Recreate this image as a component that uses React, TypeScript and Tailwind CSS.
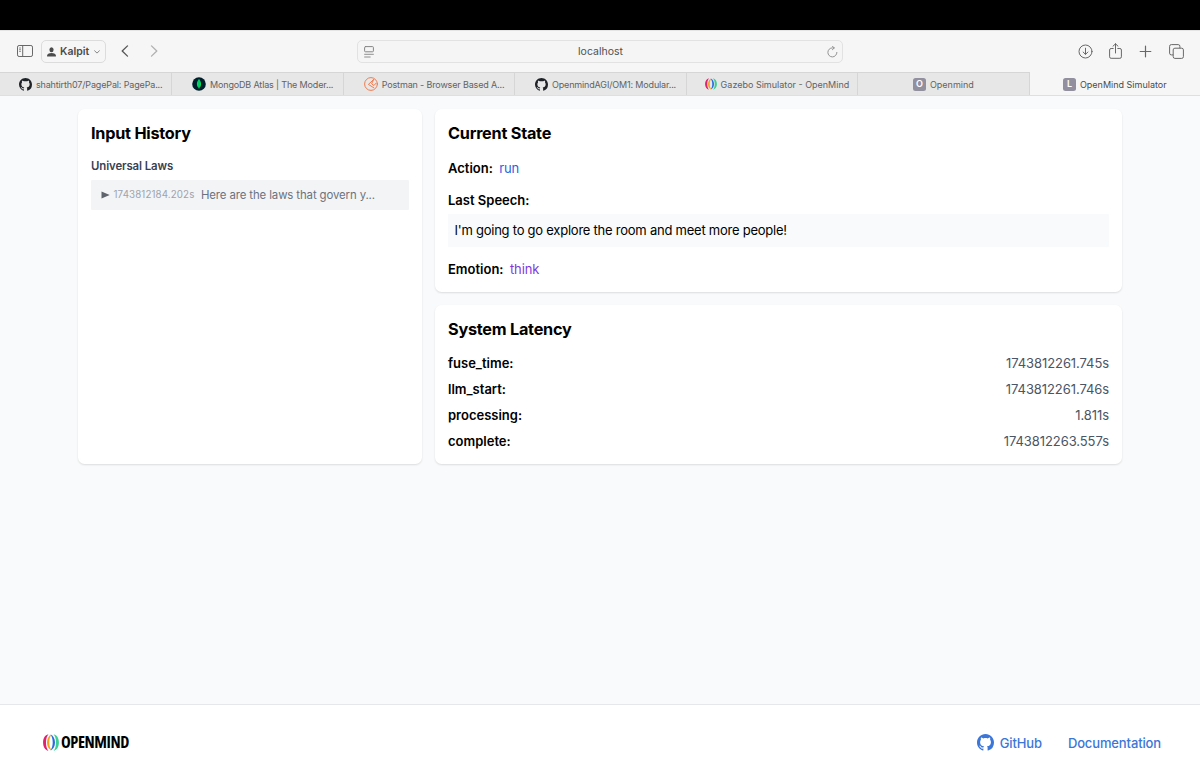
import type { ReactNode } from "react";

/* ────────────────────────────────────────────────────────────────
   Data
   ──────────────────────────────────────────────────────────────── */

interface Tab {
  title: string;
  icon: ReactNode;
  active?: boolean;
  truncated?: boolean;
}

const LATENCY = [
  { label: "fuse_time:", value: "1743812261.745s" },
  { label: "llm_start:", value: "1743812261.746s" },
  { label: "processing:", value: "1.811s" },
  { label: "complete:", value: "1743812263.557s" },
];

const TABS: Tab[] = [
  {
    title: "shahtirth07/PagePal: PagePa...",
    icon: <GitHubMark className="size-[13px] text-[#1f2328]" />,
    truncated: true,
  },
  { title: "MongoDB Atlas | The Moder...", icon: <MongoIcon />, truncated: true },
  { title: "Postman - Browser Based A...", icon: <PostmanIcon />, truncated: true },
  {
    title: "OpenmindAGI/OM1: Modular...",
    icon: <GitHubMark className="size-[13px] text-[#1f2328]" />,
    truncated: true,
  },
  {
    title: "Gazebo Simulator - OpenMind",
    icon: <OpenMindMark className="h-[12px] w-[12px]" />,
  },
  { title: "Openmind", icon: <LetterIcon letter="O" /> },
  { title: "OpenMind Simulator", icon: <LetterIcon letter="L" />, active: true },
];

/* ────────────────────────────────────────────────────────────────
   Icons
   ──────────────────────────────────────────────────────────────── */

function GitHubMark({ className }: { className?: string }) {
  return (
    <svg viewBox="0 0 16 16" fill="currentColor" className={className}>
      <path d="M8 0C3.58 0 0 3.58 0 8c0 3.54 2.29 6.53 5.47 7.59.4.07.55-.17.55-.38 0-.19-.01-.82-.01-1.49-2.01.37-2.53-.49-2.69-.94-.09-.23-.48-.94-.82-1.13-.28-.15-.68-.52-.01-.53.63-.01 1.08.58 1.23.82.72 1.21 1.87.87 2.33.66.07-.52.28-.87.51-1.07-1.78-.2-3.64-.89-3.64-3.95 0-.87.31-1.59.82-2.15-.08-.2-.36-1.02.08-2.12 0 0 .67-.21 2.2.82.64-.18 1.32-.27 2-.27s1.36.09 2 .27c1.53-1.04 2.2-.82 2.2-.82.44 1.1.16 1.92.08 2.12.51.56.82 1.27.82 2.15 0 3.07-1.87 3.75-3.65 3.95.29.25.54.73.54 1.48 0 1.07-.01 1.93-.01 2.2 0 .21.15.46.55.38A8.01 8.01 0 0 0 16 8c0-4.42-3.58-8-8-8Z" />
    </svg>
  );
}

function MongoIcon() {
  return (
    <svg viewBox="0 0 14 14" className="size-[14px]">
      <circle cx="7" cy="7" r="6.8" fill="#001e2b" />
      <path d="M7 1.9C5.6 3.5 4.9 5 4.9 6.9c0 2 .8 3.1 1.9 4v1.2h.4v-1.2c1.1-.9 1.9-2 1.9-4C9.1 5 8.4 3.5 7 1.9Z" fill="#00d963" />
      <path d="M7 2.5v8.6" stroke="#00a854" strokeWidth="0.4" />
    </svg>
  );
}

function PostmanIcon() {
  return (
    <svg viewBox="0 0 14 14" fill="none" stroke="#f0703f" strokeWidth="0.9" strokeLinecap="round" strokeLinejoin="round" className="size-[14px]">
      <circle cx="7" cy="7" r="6.4" />
      <path d="M9.6 2.6 4.4 7.4l5.4 3.4M9.6 2.600 7.600 6.800l2.300 1.700 2.200-2.300" />
    </svg>
  );
}

function LetterIcon({ letter }: { letter: string }) {
  return (
    <span className="flex size-[13px] items-center justify-center rounded-[2.5px] bg-[#92909f] text-[9px] font-semibold text-white">
      {letter}
    </span>
  );
}

/* Two nested pairs of arcs, pink to green */
function OpenMindMark({ className }: { className?: string }) {
  return (
    <svg viewBox="0 0 16 17" preserveAspectRatio="none" className={className}>
      <path d="M5.4.2C2 1 .1 4.3.1 8.5s1.900 7.500 5.300 8.300C3.800 14.800 3 12 3 8.500S3.800 2.200 5.400.2Z" fill="#e0216e" />
      <path d="M10.600.2C14 1 15.900 4.300 15.900 8.500s-1.900 7.500-5.300 8.300c1.600-2 2.400-4.800 2.400-8.300s-.8-6.300-2.400-8.300Z" fill="#3ecf94" />
      <path d="M8.600.6C5.700 1.600 4 4.700 4 8.500s1.700 6.900 4.600 7.900C7.100 14.400 6.300 11.800 6.300 8.500S7.100 2.600 8.600.6Z" fill="#f6a11c" />
      <path d="M7.400.6C10.300 1.600 12 4.700 12 8.500s-1.700 6.900-4.600 7.900c1.500-2 2.300-4.600 2.300-7.900S8.900 2.600 7.400.6Z" fill="#2b6be0" />
    </svg>
  );
}

/* ────────────────────────────────────────────────────────────────
   Browser chrome
   ──────────────────────────────────────────────────────────────── */

function Toolbar() {
  return (
    <div className="flex h-[42px] items-center border-t border-[#e4e4e4] bg-[#f6f6f6] text-[#686868]">
      <div className="flex w-[357px] items-center pl-[17px]">
        <svg viewBox="0 0 16 12" fill="none" stroke="currentColor" className="-mt-px h-[12px] w-[16px]">
          <rect x="0.5" y="0.5" width="15" height="11" rx="1.6" />
          <path d="M5.7.5v11" />
          <path d="M2 3h2M2 4.700h2M2 6.400h2" strokeWidth="0.7" />
        </svg>
        <div className="ml-[8px] flex h-[23px] w-[65px] items-center rounded-[5px] border border-[#dcdcdc] pl-[5px] text-[#4c4c4c]">
          <svg viewBox="0 0 9 10" fill="currentColor" className="h-[10px] w-[9px]">
            <ellipse cx="4.5" cy="2.7" rx="2.1" ry="2.5" />
            <path d="M0 8.900C0 7 1.900 6 4.500 6S9 7 9 8.900c0 .4-.3.6-.6.6H.6C.3 9.500 0 9.300 0 8.900Z" />
          </svg>
          <span className="ml-[4px] text-[10.5px] font-semibold">Kalpit</span>
          <svg viewBox="0 0 6 4" fill="none" stroke="#858585" strokeLinecap="round" strokeLinejoin="round" className="ml-[5px] h-[4px] w-[6px]">
            <path d="m.6.8 2.400 2.300L5.400.8" />
          </svg>
        </div>
        <svg viewBox="0 0 8 12" fill="none" stroke="#555" strokeWidth="1.3" strokeLinecap="round" strokeLinejoin="round" className="-mt-px ml-[15px] h-[12px] w-[8px]">
          <path d="M6.500.9 1.200 6l5.300 5.100" />
        </svg>
        <svg viewBox="0 0 8 12" fill="none" stroke="#b0b0b0" strokeWidth="1.3" strokeLinecap="round" strokeLinejoin="round" className="-mt-px ml-[21px] h-[12px] w-[8px]">
          <path d="M1.500.9 6.800 6l-5.300 5.100" />
        </svg>
      </div>

      {/* Address field */}
      <div className="flex h-[23px] w-[486px] items-center rounded-[5px] border border-[#e2e2e2] bg-[#f5f5f5] pr-[4px] pl-[6px]">
        <svg viewBox="0 0 10 12" fill="none" stroke="#858585" strokeLinecap="round" className="h-[12px] w-[10px]">
          <rect x="0.6" y="0.6" width="8.8" height="5.2" rx="0.9" />
          <path d="M.6 8.300h8.800M.6 11h5.600" strokeWidth="0.9" />
        </svg>
        <span className="flex-1 pt-px text-center text-[10.5px] text-[#505050]">localhost</span>
        <svg viewBox="0 0 11 12" fill="none" stroke="#929292" strokeLinecap="round" strokeLinejoin="round" className="h-[12px] w-[11px]">
          <path d="M9.900 6.400a4.500 4.500 0 1 1-4.500-4.500h1.800M5.400.3l1.900 1.600-1.900 1.800" />
        </svg>
      </div>

      <div className="flex flex-1 items-center justify-end gap-[12px] pr-[16px] pb-px">
        <svg viewBox="0 0 15 15" fill="none" stroke="currentColor" strokeLinecap="round" strokeLinejoin="round" className="mr-[4px] size-[15px]">
          <circle cx="7.5" cy="7.5" r="6.5" />
          <path d="M7.500 4.200v6M5.100 8l2.400 2.400L9.900 8" />
        </svg>
        <svg viewBox="0 0 13 16" fill="none" stroke="currentColor" strokeLinecap="round" strokeLinejoin="round" className="h-[16px] w-[13px]">
          <path d="M4.200 5.500H2.100A1.500 1.500 0 0 0 .6 7v6.800a1.500 1.500 0 0 0 1.500 1.500h8.800a1.500 1.500 0 0 0 1.500-1.500V7a1.500 1.500 0 0 0-1.500-1.500H8.800M6.500 10V.8M4 3.200 6.500.8 9 3.200" />
        </svg>
        <svg viewBox="0 0 13 13" fill="none" stroke="currentColor" strokeWidth="1.2" strokeLinecap="round" className="ml-[5px] size-[13px]">
          <path d="M6.500 1.200v10.600M1.200 6.500h10.600" />
        </svg>
        <svg viewBox="0 0 15 15" fill="none" stroke="currentColor" strokeLinejoin="round" className="ml-[5px] size-[15px]">
          <rect x="4.2" y="4.2" width="10.2" height="10.2" rx="1.7" />
          <path d="M4.200 10.900H2.300A1.700 1.700 0 0 1 .6 9.200V2.300A1.700 1.700 0 0 1 2.300.6h6.900a1.700 1.700 0 0 1 1.700 1.700v1.900" />
        </svg>
      </div>
    </div>
  );
}

function TabBar() {
  return (
    <div className="grid h-[24px] grid-cols-7 border-b border-[#dedfe2]">
      {TABS.map((tab, i) => (
        <div
          key={tab.title}
          className={`flex items-center justify-center gap-[4px] border-l border-[#d6d6d6] first:border-l-0 ${
            tab.active
              ? "bg-[#f6f6f7] pt-px text-[#4a4a4a]"
              : "border-t bg-[#e7e7e7] text-[#626262]"
          } ${i < 5 ? "pl-[10px]" : ""}`}
        >
          {tab.icon}
          <span
            className={`pt-px text-[9px] whitespace-nowrap ${
              tab.truncated ? "tracking-[-0.15px]" : ""
            }`}
          >
            {tab.title}
          </span>
        </div>
      ))}
    </div>
  );
}

/* ────────────────────────────────────────────────────────────────
   Simulator panels
   ──────────────────────────────────────────────────────────────── */

function Card({ title, children }: { title: string; children: ReactNode }) {
  return (
    <section className="rounded-[6.5px] bg-white px-[13px] pt-[13px] pb-[12.5px] shadow-[0_1px_2px_rgba(0,0,0,0.12)]">
      <h2 className="mb-[14px] text-[16.25px] leading-[22.75px] font-bold tracking-[-0.015em]">
        {title}
      </h2>
      {children}
    </section>
  );
}

function InputHistory() {
  return (
    <Card title="Input History">
      <h3 className="-mt-[0.5px] mb-[5.5px] text-[11.4px] leading-[16.25px] font-semibold tracking-[-0.1px] text-[#374151]">
        Universal Laws
      </h3>
      <div className="flex h-[30px] items-center rounded-[1px] bg-[#f3f4f6] pl-[10px]">
        <svg viewBox="0 0 9 8" fill="#5f636b" className="h-[8px] w-[9px]">
          <path d="M.5.4 8.700 4 .5 7.600Z" />
        </svg>
        <span className="ml-[3.5px] text-[9.75px] tracking-[0.12px] text-[#9ca3af]">
          1743812184.202s
        </span>
        <span className="ml-[6.5px] pt-px text-[11.4px] tracking-[-0.11px] text-[#6b7280]">
          Here are the laws that govern y...
        </span>
      </div>
    </Card>
  );
}

function CurrentState() {
  return (
    <Card title="Current State">
      <div className="space-y-[13px]">
        <p>
          <span className="font-semibold">Action:</span>
          <span className="ml-[6.5px] tracking-[-0.23px] text-[#2f5fe0]">run</span>
        </p>
        <div>
          <p className="font-semibold">Last Speech:</p>
          <p className="mt-[3.25px] rounded-[1px] bg-[#f9fafb] p-[6.5px] tracking-[-0.24px]">
            I&apos;m going to go explore the room and meet more people!
          </p>
        </div>
        <p>
          <span className="font-semibold">Emotion:</span>
          <span className="ml-[6.5px] tracking-[-0.15px] text-[#8238dc]">think</span>
        </p>
      </div>
    </Card>
  );
}

function SystemLatency() {
  return (
    <Card title="System Latency">
      <dl className="space-y-[6.5px]">
        {LATENCY.map((row) => (
          <div key={row.label} className="flex justify-between">
            <dt className="font-semibold">{row.label}</dt>
            <dd className="tracking-[-0.08px] text-[#4b5563]">{row.value}</dd>
          </div>
        ))}
      </dl>
    </Card>
  );
}

function Footer() {
  return (
    <footer className="flex h-[76px] items-center justify-between border-t border-[#e5e7eb] bg-white pr-[39px] pl-[43px]">
      <div className="flex items-center gap-[2px]">
        <OpenMindMark className="h-[17px] w-[16px]" />
        <span className="pb-[2px] font-['Open_Sans','Noto_Sans',sans-serif] text-[16.4px] font-bold tracking-[-0.4px] text-black [font-stretch:75%]">
          OPENMIND
        </span>
      </div>
      <nav className="flex items-center gap-[26px] font-medium tracking-[-0.13px] text-[#3b76d8]">
        <a className="flex items-center gap-[6px]">
          <GitHubMark className="size-[17px]" />
          <span className="pt-[2px]">GitHub</span>
        </a>
        <a className="pt-[2px]">Documentation</a>
      </nav>
    </footer>
  );
}

export default function App() {
  return (
    <div className="flex h-screen flex-col overflow-hidden bg-[#f9fafb] font-[Inter,sans-serif] text-[13px] leading-[19.5px] text-black">
      <div className="h-[30px] shrink-0 bg-black" />
      <header className="shrink-0">
        <Toolbar />
        <TabBar />
      </header>
      <main className="flex-1 pt-[13px]">
        <div className="mx-auto grid w-[1044px] grid-cols-[344px_1fr] gap-[13px]">
          <InputHistory />
          <div className="flex flex-col gap-[13px]">
            <CurrentState />
            <SystemLatency />
          </div>
        </div>
      </main>
      <Footer />
    </div>
  );
}
